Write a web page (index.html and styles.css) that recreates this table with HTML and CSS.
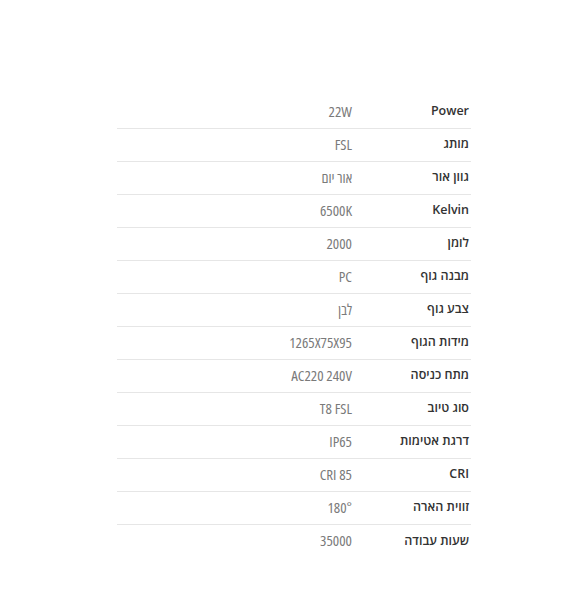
FILE: index.html
```html
<!DOCTYPE html>
<html lang="he" dir="rtl">
<head>
<meta charset="utf-8">
<link rel="stylesheet" href="styles.css">
</head>
<body>
<div class="specs">
  <div class="row"><div class="label">Power</div><div class="value">22W</div></div>
  <div class="row"><div class="label">מותג</div><div class="value">FSL</div></div>
  <div class="row"><div class="label">גוון אור</div><div class="value">אור יום</div></div>
  <div class="row"><div class="label">Kelvin</div><div class="value">6500K</div></div>
  <div class="row"><div class="label">לומן</div><div class="value">2000</div></div>
  <div class="row"><div class="label">מבנה גוף</div><div class="value">PC</div></div>
  <div class="row"><div class="label">צבע גוף</div><div class="value">לבן</div></div>
  <div class="row"><div class="label">מידות הגוף</div><div class="value">1265X75X95</div></div>
  <div class="row"><div class="label">מתח כניסה</div><div class="value">AC220 240V</div></div>
  <div class="row"><div class="label">סוג טיוב</div><div class="value">T8 FSL</div></div>
  <div class="row"><div class="label">דרגת אטימות</div><div class="value">IP65</div></div>
  <div class="row"><div class="label">CRI</div><div class="value">CRI 85</div></div>
  <div class="row"><div class="label">זווית הארה</div><div class="value">180°</div></div>
  <div class="row last"><div class="label">שעות עבודה</div><div class="value">35000</div></div>
</div>
</body>
</html>
```
FILE: styles.css
```css
html, body {
  margin: 0;
  padding: 0;
  background: #ffffff;
}
body {
  font-family: "Open Sans", "Noto Sans", sans-serif;
  font-size: 14px;
}
.specs {
  width: 354px;
  margin-right: 99px;
  padding-top: 96px;
}
.row {
  display: flex;
  box-sizing: border-box;
  height: 33px;
  padding-bottom: 3px;
  align-items: center;
  border-bottom: 1px solid #e6e6e6;
}
.row.last {
  border-bottom: none;
}
.label {
  width: 117px;
  padding-right: 2px;
  font-size: 12.5px;
  font-weight: 600;
  color: #333333;
}
.value {
  flex: 1;
  color: #7a7a7a;
  font-size: 15px;
  font-stretch: condensed;
  font-weight: 400;
}
```
